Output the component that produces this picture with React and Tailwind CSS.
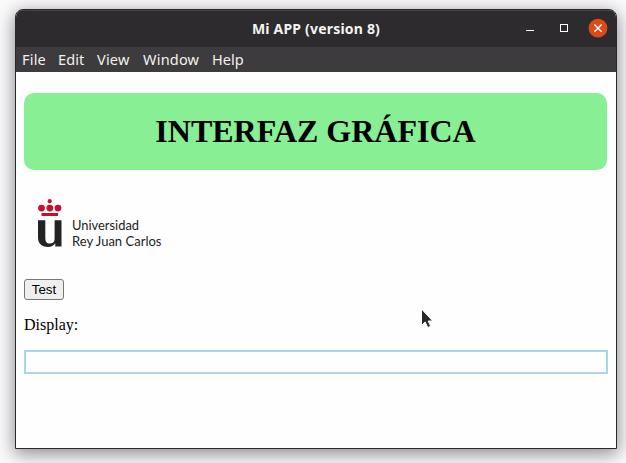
const menus = [
  { label: 'File', cls: 'w-[36px] tracking-[0.2px]' },
  { label: 'Edit', cls: 'w-[39px] tracking-[0.1px]' },
  { label: 'View', cls: 'w-[46px] tracking-[0.2px]' },
  { label: 'Window', cls: 'w-[69px] tracking-[0.2px]' },
  { label: 'Help', cls: 'w-[40px] tracking-[0px]' },
];

function TitleBar() {
  return (
    <header className="relative flex h-[37px] shrink-0 items-center justify-center border-t border-[#454346] bg-[#2d2b2e]">
      <h1 className="whitespace-nowrap font-['Noto_Sans',sans-serif] text-[14px] leading-5 font-bold tracking-[0.2px] text-[#f5f3f1]">
        Mi APP (version 8)
      </h1>
      <div className="absolute top-0 right-0 flex h-9 items-center">
        <svg className="h-9 w-[100px]" viewBox="516 10 100 36" fill="none">
          <path d="M526 29.5h8" stroke="#fff" />
          <rect x="560.5" y="23.5" width="7" height="7" stroke="#fff" />
          <circle cx="598" cy="27.2" r="9.4" fill="#dc4a17" />
          <path d="M594.4 23.6l7.2 7.2M601.6 23.6l-7.2 7.2" stroke="#fff" strokeWidth="1.4" />
        </svg>
      </div>
    </header>
  );
}

function Logo() {
  return (
    <svg className="block h-[75px] w-[160px]" viewBox="20 185 160 75" role="img" aria-label="Universidad Rey Juan Carlos">
      <g fill="#c4122e">
        <circle cx="49.7" cy="201.2" r="2.1" />
        <circle cx="41.5" cy="208.1" r="3.4" />
        <circle cx="49.8" cy="208.1" r="3.4" />
        <circle cx="58" cy="208.1" r="3.4" />
        <rect x="41.5" y="213" width="16.6" height="3" />
      </g>
      <path
        d="M38 220.3h7.3v17.2c0 4.1 1.3 6 4.5 6 2.8 0 4.8-1.6 4.8-4.6v-18.6h6.9v26.2h-6.2v-3.2c-1.6 2.4-4 3.6-7.2 3.6-6.7 0-10.1-3.4-10.1-9.3z"
        fill="#232224"
      />
      <g fill="#1e1d1f" fontFamily="Lato, sans-serif" fontSize="12.9">
        <text x="72" y="230" textLength="67" lengthAdjust="spacingAndGlyphs">Universidad</text>
        <text x="72" y="246" textLength="89.5" lengthAdjust="spacingAndGlyphs">Rey Juan Carlos</text>
      </g>
    </svg>
  );
}

export default function App() {
  return (
    <div className="relative h-[463px] w-[626px] overflow-hidden bg-[#fcfbfc] pt-[9px] pl-[15px]">
      <div className="flex h-[440px] w-[602px] flex-col overflow-hidden rounded-t-[8px] border border-[#2b292c] bg-[#fefefe] shadow-[0_4px_18px_1px_rgba(30,25,35,0.5)]">
        <TitleBar />
        <nav className="flex h-[25px] shrink-0 items-center bg-[#3e3b3e] pb-[2px] pl-[6px] font-['Noto_Sans',sans-serif] text-[14.5px] leading-5 text-[#f3f1ee]">
          {menus.map((m) => (
            <span key={m.label} className={`${m.cls} whitespace-nowrap`}>{m.label}</span>
          ))}
        </nav>
        <main className="flex flex-col px-2 pt-[21px] font-['Liberation_Serif',serif] text-black">
          <h2 className="mr-px flex h-[77px] items-center justify-center rounded-[10px] bg-[#88ef94] text-[32px] leading-[37px] font-bold">
            INTERFAZ GRÁFICA
          </h2>
          <div className="-ml-1 mt-[15px]">
            <Logo />
          </div>
          <button className="mt-[19px] flex h-[21px] w-[40px] items-center justify-center rounded-[3px] border border-[#767676] bg-[#efefef] font-['Liberation_Sans',sans-serif] text-[13.333px] leading-[15px]">
            Test
          </button>
          <p className="mt-4 text-[16px] leading-[18px]">Display:</p>
          <div className="mt-4 h-6 border-2 border-[#a9d7e3]" />
        </main>
      </div>
      <svg className="absolute top-[307px] left-[418px] h-6 w-[18px]" viewBox="418 307 18 24">
        <path
          d="M421.5 309v16.3l3.7-3.3 2.6 5.6 2.9-1.3-2.5-5.3h4.5z"
          fill="#29282a"
          stroke="#fff"
          strokeWidth="1"
        />
      </svg>
    </div>
  );
}
